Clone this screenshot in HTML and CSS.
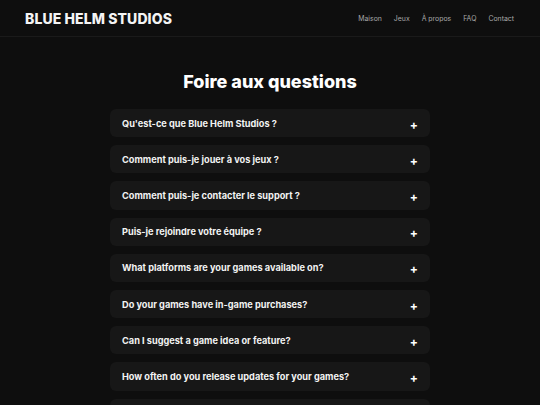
FILE: index.html
```html
<!DOCTYPE html>
<html lang="fr">
<head>
<meta charset="utf-8">
<title>FAQ - Blue Helm Studios</title>
<link rel="stylesheet" href="styles.css">
</head>
<body>
<header class="site-header">
  <div class="logo">BLUE HELM STUDIOS</div>
  <nav class="nav">
    <a href="#">Maison</a>
    <a href="#">Jeux</a>
    <a href="#">À propos</a>
    <a href="#">FAQ</a>
    <a href="#">Contact</a>
  </nav>
</header>
<main class="faq">
  <h1 class="faq-title">Foire aux questions</h1>
  <div class="faq-list">
    <div class="faq-item"><span class="q">Qu'est-ce que Blue Helm Studios ?</span><span class="plus">+</span></div>
    <div class="faq-item"><span class="q">Comment puis-je jouer à vos jeux ?</span><span class="plus">+</span></div>
    <div class="faq-item"><span class="q">Comment puis-je contacter le support ?</span><span class="plus">+</span></div>
    <div class="faq-item"><span class="q">Puis-je rejoindre votre équipe ?</span><span class="plus">+</span></div>
    <div class="faq-item"><span class="q">What platforms are your games available on?</span><span class="plus">+</span></div>
    <div class="faq-item"><span class="q">Do your games have in-game purchases?</span><span class="plus">+</span></div>
    <div class="faq-item"><span class="q">Can I suggest a game idea or feature?</span><span class="plus">+</span></div>
    <div class="faq-item"><span class="q">How often do you release updates for your games?</span><span class="plus">+</span></div>
    <div class="faq-item"><span class="q">Do you offer refunds?</span><span class="plus">+</span></div>
  </div>
</main>
</body>
</html>
```
FILE: styles.css
```css
* { box-sizing: border-box; }
html, body { margin: 0; padding: 0; }
body {
  background: #0e0e0e;
  color: #fff;
  font-family: Inter, "Noto Sans", sans-serif;
  overflow: hidden;
}
.site-header {
  height: 37px;
  display: flex;
  align-items: center;
  justify-content: space-between;
  padding: 0 26px 0 25px;
  border-bottom: 1px solid #1a1a1a;
}
.logo {
  font-size: 14px;
  font-weight: 800;
  letter-spacing: 0.1px;
  color: #f4f4f4;
}
.nav {
  display: flex;
  gap: 12px;
}
.nav a {
  color: #a8a8a8;
  text-decoration: none;
  font-size: 6.9px;
}
.faq {
  display: flex;
  flex-direction: column;
  align-items: center;
  padding-top: 35px;
}
.faq-title {
  margin: 0 0 17px;
  font-size: 18px;
  font-weight: 800;
  line-height: 20px;
}
.faq-list {
  width: 320px;
  display: flex;
  flex-direction: column;
  gap: 8px;
}
.faq-item {
  height: 28.2px;
  flex: none;
  background: #171717;
  border-radius: 6px;
  display: flex;
  align-items: center;
  justify-content: space-between;
  padding: 0 12px 0 12px;
}
.q {
  font-size: 9.2px;
  font-weight: 700;
  color: #f2f2f2;
}
.plus {
  font-size: 12px;
  font-weight: 700;
  line-height: 1;
  margin-top: 3px;
}
```
